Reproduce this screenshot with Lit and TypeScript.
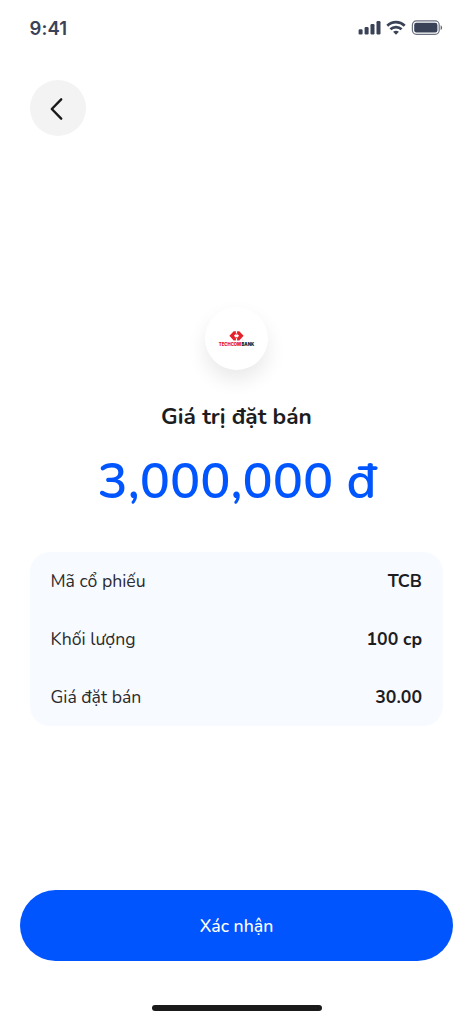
import { LitElement, html, css } from "lit";
import { customElement } from "lit/decorators.js";

@customElement("status-bar")
class StatusBar extends LitElement {
  static styles = css`
    :host { display: flex; justify-content: space-between; align-items: center; height: 55px; padding: 0 30px 0 29.5px; box-sizing: border-box; }
    .time { font: 600 18.5px/24px Inter, sans-serif; color: #394256; letter-spacing: 0.1px; }
    .icons { display: block; }
  `;
  render() {
    return html`
      <span class="time">9:41</span>
      <svg class="icons" width="85" height="16" viewBox="0 0 85 16" fill="#394256">
        <rect x="0.6" y="9.3" width="4" height="5.2" rx="1.2" />
        <rect x="6.6" y="7" width="4" height="7.5" rx="1.2" />
        <rect x="12.5" y="4" width="4" height="10.5" rx="1.2" />
        <rect x="18.5" y="1" width="4" height="13.5" rx="1.2" />
        <g fill="none" stroke="#394256" stroke-width="2.7">
          <path d="M29.3 5.7a12.6 12.6 0 0 1 17.4 0" />
          <path d="M32.4 9.3a8.2 8.2 0 0 1 11.2 0" />
        </g>
        <path d="M35.1 11.8a4.7 4.7 0 0 1 5.8 0L38 14.8z" />
        <rect x="54.4" y="0.9" width="26.8" height="13.4" rx="4" fill="none" stroke="#394256" stroke-opacity=".75" stroke-width="1.2" />
        <rect x="56.2" y="2.7" width="23.2" height="9.8" rx="2.2" />
        <path d="M82.6 5.2c2 .8 2 4 0 4.8z" fill-opacity=".8" />
      </svg>
    `;
  }
}

@customElement("bank-logo")
class BankLogo extends LitElement {
  static styles = css`
    :host { display: flex; flex-direction: column; align-items: center; width: 63px; height: 63px; padding-top: 23.5px; box-sizing: border-box; border-radius: 50%; background: #fff; box-shadow: 0 10px 20px rgba(0, 0, 0, 0.09); }
    .mark { display: block; }
    .name { display: flex; gap: 0.3px; margin-top: 1.5px; font: 900 4.25px/6px Inter, sans-serif; color: #222; }
    .first { color: #e5222c; }
  `;
  render() {
    return html`
      <svg class="mark" width="15" height="10" viewBox="23.8 23.5 15 10">
        <g fill="#e5222c">
          <path d="M24.2 28.3l4.3-4.6h2.2v2.7l-2 1.9 2 1.9v2.7h-2.2z" />
          <path d="M38.4 28.3l-4.3-4.6h-2.2v2.7l2 1.9-2 1.9v2.7h2.2z" />
          <path d="M30.7 26.9h1.2v-1h-1.2zM30.7 30.7h1.2v-1h-1.2z" />
        </g>
        <circle cx="37.7" cy="32.4" r=".5" fill="#f3a0a4" />
      </svg>
      <div class="name"><span class="first">TECHCOM</span><span>BANK</span></div>
    `;
  }
}

const ROWS = [
  { label: "Mã cổ phiếu", value: "TCB" },
  { label: "Khối lượng", value: "100 cp" },
  { label: "Giá đặt bán", value: "30.00" },
];

@customElement("app-root")
class AppRoot extends LitElement {
  static styles = css`
    :host { display: flex; flex-direction: column; width: 473px; height: 1024px; background: #fff; color: #1d1d1f; font-family: Nunito, Lato, "Noto Sans", sans-serif; box-sizing: border-box; overflow: hidden; }
    .back { display: flex; width: 56px; height: 56px; margin: 25px 0 0 30px; padding: 0; border: 0; border-radius: 50%; background: #f3f3f3; }
    .back svg { display: block; }
    .logo { margin: 171px auto 0; }
    .title { margin: 32px 0 0; text-align: center; font-size: 22.7px; line-height: 30px; font-weight: 700; }
    .amount { margin-top: 18px; padding-left: 1px; text-align: center; font-size: 50.45px; line-height: 64px; font-weight: 560; color: #0055ff; white-space: nowrap; }
    .card { display: flex; flex-direction: column; margin: 38px 30px 0; border-radius: 20px; background: #f7faff; padding: 0 21px 0 20.5px; }
    .row { display: flex; justify-content: space-between; align-items: center; height: 57.8px; font-size: 17.66px; }
    .label { color: #2b2b2d; }
    .value { font-weight: 700; }
    .confirm { height: 71px; margin: 164.6px 20px 0; padding: 0; border: 0; border-radius: 36px; background: #0055ff; color: #fff; font: 500 17.66px/24px Nunito, Lato, "Noto Sans", sans-serif; }
    .row:last-child { height: 58px; }
    .home { width: 170px; height: 6px; margin: 44px auto 0; border-radius: 3px; background: #1a1a1a; }
  `;
  render() {
    return html`
      <status-bar></status-bar>
      <button class="back" aria-label="Quay lại">
        <svg width="56" height="56" viewBox="0 0 56 56" fill="none" stroke="#1a1a1a" stroke-width="2.4" stroke-linecap="round" stroke-linejoin="round">
          <path d="M31.2 19.3L21.8 29l9.4 9.7" />
        </svg>
      </button>
      <bank-logo class="logo"></bank-logo>
      <h1 class="title">Giá trị đặt bán</h1>
      <div class="amount">3,000,000 đ</div>
      <div class="card">
        ${ROWS.map((r) => html`<div class="row"><span class="label">${r.label}</span><span class="value">${r.value}</span></div>`)}
      </div>
      <button class="confirm">Xác nhận</button>
      <div class="home"></div>
    `;
  }
}
